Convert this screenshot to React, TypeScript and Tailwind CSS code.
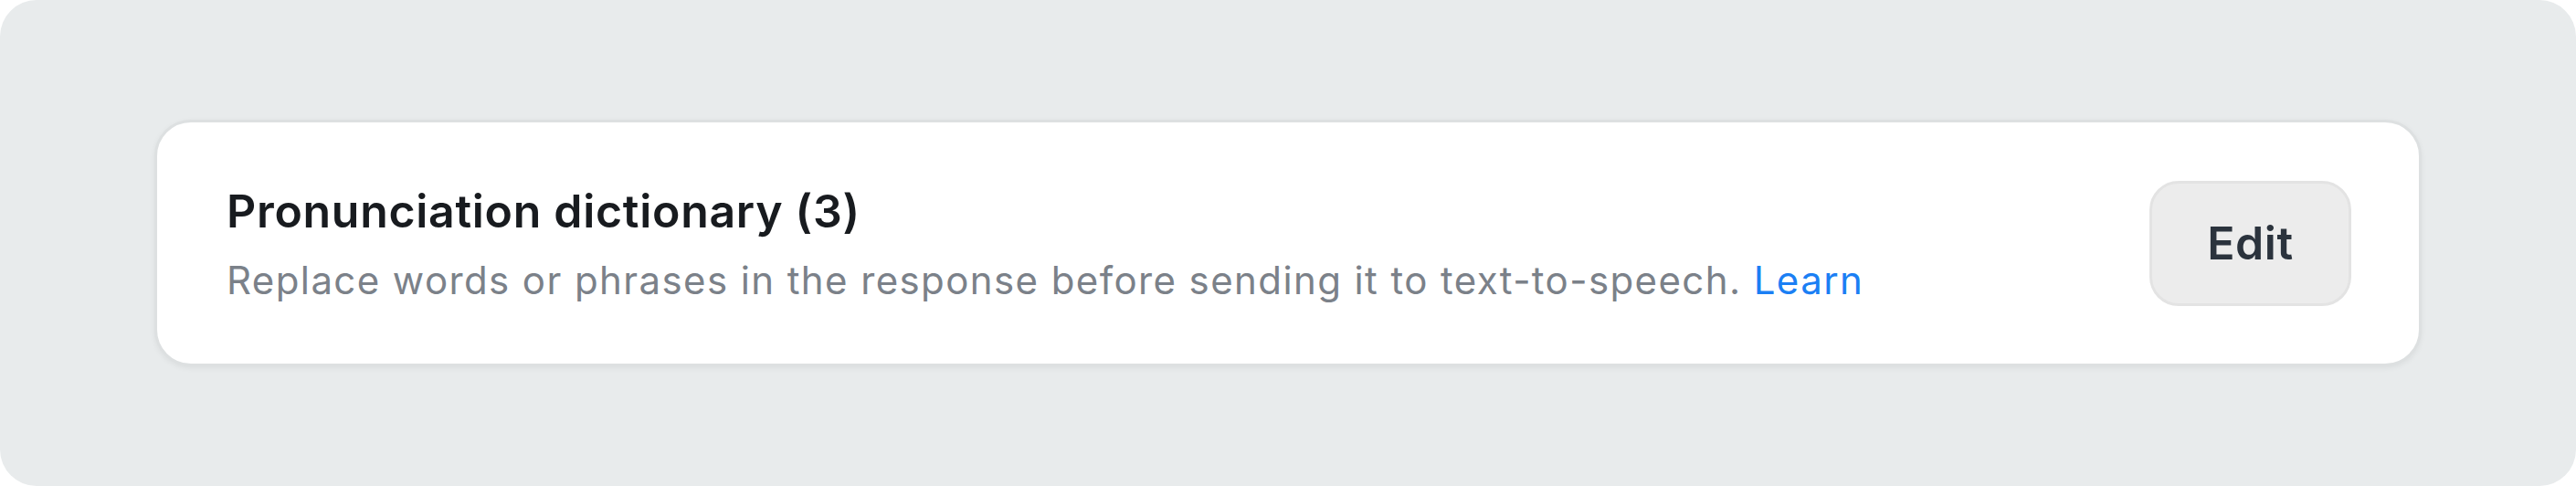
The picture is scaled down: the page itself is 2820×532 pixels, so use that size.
export default function App() {
  return (
    <div className="w-[2820px] h-[532px] bg-[#e8ebec] rounded-[40px] flex items-center px-[169px]" style={{ fontFamily: 'Inter, "Noto Sans", sans-serif' }}>
      <div className="flex-1 h-[270px] bg-white rounded-[40px] border-[3px] border-[#dde0e1] shadow-[0_2px_6px_rgba(0,0,0,0.06)] flex items-center justify-between pl-[76px] pr-[74px]">
        <div className="flex flex-col mt-[4px]">
          <div className="text-[50px] leading-[60px] font-semibold tracking-[0.7px] text-[#181b1f]">Pronunciation dictionary (3)</div>
          <div className="text-[42px] leading-[56px] mt-[18px] tracking-[1.4px] text-[#7b8189]">
            Replace words or phrases in the response before sending it to text-to-speech.{' '}
            <span className="text-[#1b7ff4]">Learn</span>
          </div>
        </div>
        <button className="w-[221px] h-[137px] rounded-[32px] bg-[#ececec] border-[3px] border-[#e3e3e3] text-[50px] font-semibold tracking-[0.6px] text-[#2b333d] flex items-center justify-center">
          Edit
        </button>
      </div>
    </div>
  );
}
